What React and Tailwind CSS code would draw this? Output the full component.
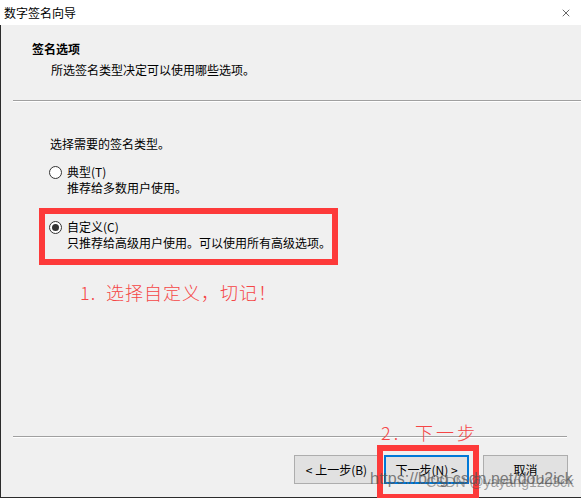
import { X } from 'lucide-react';

const cjk = { fontFamily: '"Noto Sans CJK SC", "Noto Sans", sans-serif' };
const mark = { fontFamily: '"Liberation Sans", Arial, sans-serif' };

function Radio({ checked }) {
  return (
    <span className="mt-[1px] flex h-[13px] w-[13px] shrink-0 items-center justify-center rounded-full border border-[#333] bg-white">
      {checked && <span className="h-[7px] w-[7px] rounded-full bg-[#333]" />}
    </span>
  );
}

function Option({ label, desc, checked }) {
  return (
    <div className="flex flex-col">
      <div className="flex items-center gap-[5px] h-4">
        <Radio checked={checked} />
        <span className="leading-4">{label}</span>
      </div>
      <div className="pl-[18px] leading-4">{desc}</div>
    </div>
  );
}

function Button({ children, focused }) {
  return (
    <button
      className={`h-[29px] w-[85px] bg-[#e1e1e1] text-[12px] text-black ${
        focused ? 'border-2 border-[#0078d7]' : 'border border-[#adadad]'
      }`}
      style={cjk}
    >
      {children}
    </button>
  );
}

export default function App() {
  return (
    <div className="relative flex h-[498px] w-[581px] flex-col overflow-hidden bg-[#f0f0f0] text-[12px] text-black" style={cjk}>
      {/* title bar */}
      <div className="flex h-[25px] shrink-0 items-center justify-between bg-white pl-[4px] pr-[9px]">
        <span className="leading-4">数字签名向导</span>
        <X className="h-[12px] w-[12px] text-black" strokeWidth={1.2} />
      </div>

      <div className="flex flex-1 flex-col border-b border-l border-[#2b2b2b]">
        {/* header */}
        <div className="pt-4 pl-[31px] font-bold leading-4">签名选项</div>
        <div className="mt-[5px] pl-[50px] leading-4">所选签名类型决定可以使用哪些选项。</div>
        <div className="mt-[22px] ml-[12px] h-[1px] bg-[#a0a0a0]" />
        <div className="h-[1px] bg-white ml-[12px]" />

        {/* body */}
        <div className="mt-[34px] pl-[49px] leading-4">选择需要的签名类型。</div>
        <div className="mt-[12px] pl-[48px]">
          <Option label="典型(T)" desc="推荐给多数用户使用。" />
        </div>
        <div className="mt-[12px] ml-[38px] h-[57px] w-[299px] border-[6px] border-[#fd3a3a] pt-[5px] pl-[4px]">
          <Option label="自定义(C)" desc="只推荐给高级用户使用。可以使用所有高级选项。" checked />
        </div>
        <div className="mt-[15px] pl-[79px] text-[18px] font-light leading-6 tracking-[1px] text-[#f54646]">
          1.&nbsp;&nbsp;选择自定义，切记！
        </div>

        <div className="flex-1" />

        {/* footer */}
        <div className="ml-[12px] mr-[14px] h-[1px] bg-[#a0a0a0]" />
        <div className="ml-[12px] mr-[14px] h-[1px] bg-white" />
        <div className="mt-[17px] mb-[13px] flex pl-[293px]">
          <Button>&lt; 上一步(B)</Button>
          <div className="ml-[5px]">
            <Button focused>下一步(N) &gt;</Button>
          </div>
          <div className="ml-[14px]">
            <Button>取消</Button>
          </div>
        </div>
      </div>

      {/* annotations */}
      <div className="absolute left-[381px] top-[420px] whitespace-nowrap text-[18px] font-light leading-6 tracking-[3px] text-[#f54646]">
        2.&nbsp;&nbsp;下一步
      </div>
      <div className="absolute left-[377px] top-[445px] h-[55px] w-[102px] border-[6px] border-[#fd3a3a]" />

      {/* watermark */}
      <div className="pointer-events-none absolute left-[370px] top-[469px] whitespace-nowrap text-[16px] leading-5 text-[#555]/75" style={mark}>
        https://blog.csdn.net/dou2ick
      </div>
      <div className="pointer-events-none absolute left-[426px] top-[472px] whitespace-nowrap text-[14px] leading-5 text-[#555]/55" style={mark}>
        CSDN @yayang1203ck
      </div>
    </div>
  );
}
